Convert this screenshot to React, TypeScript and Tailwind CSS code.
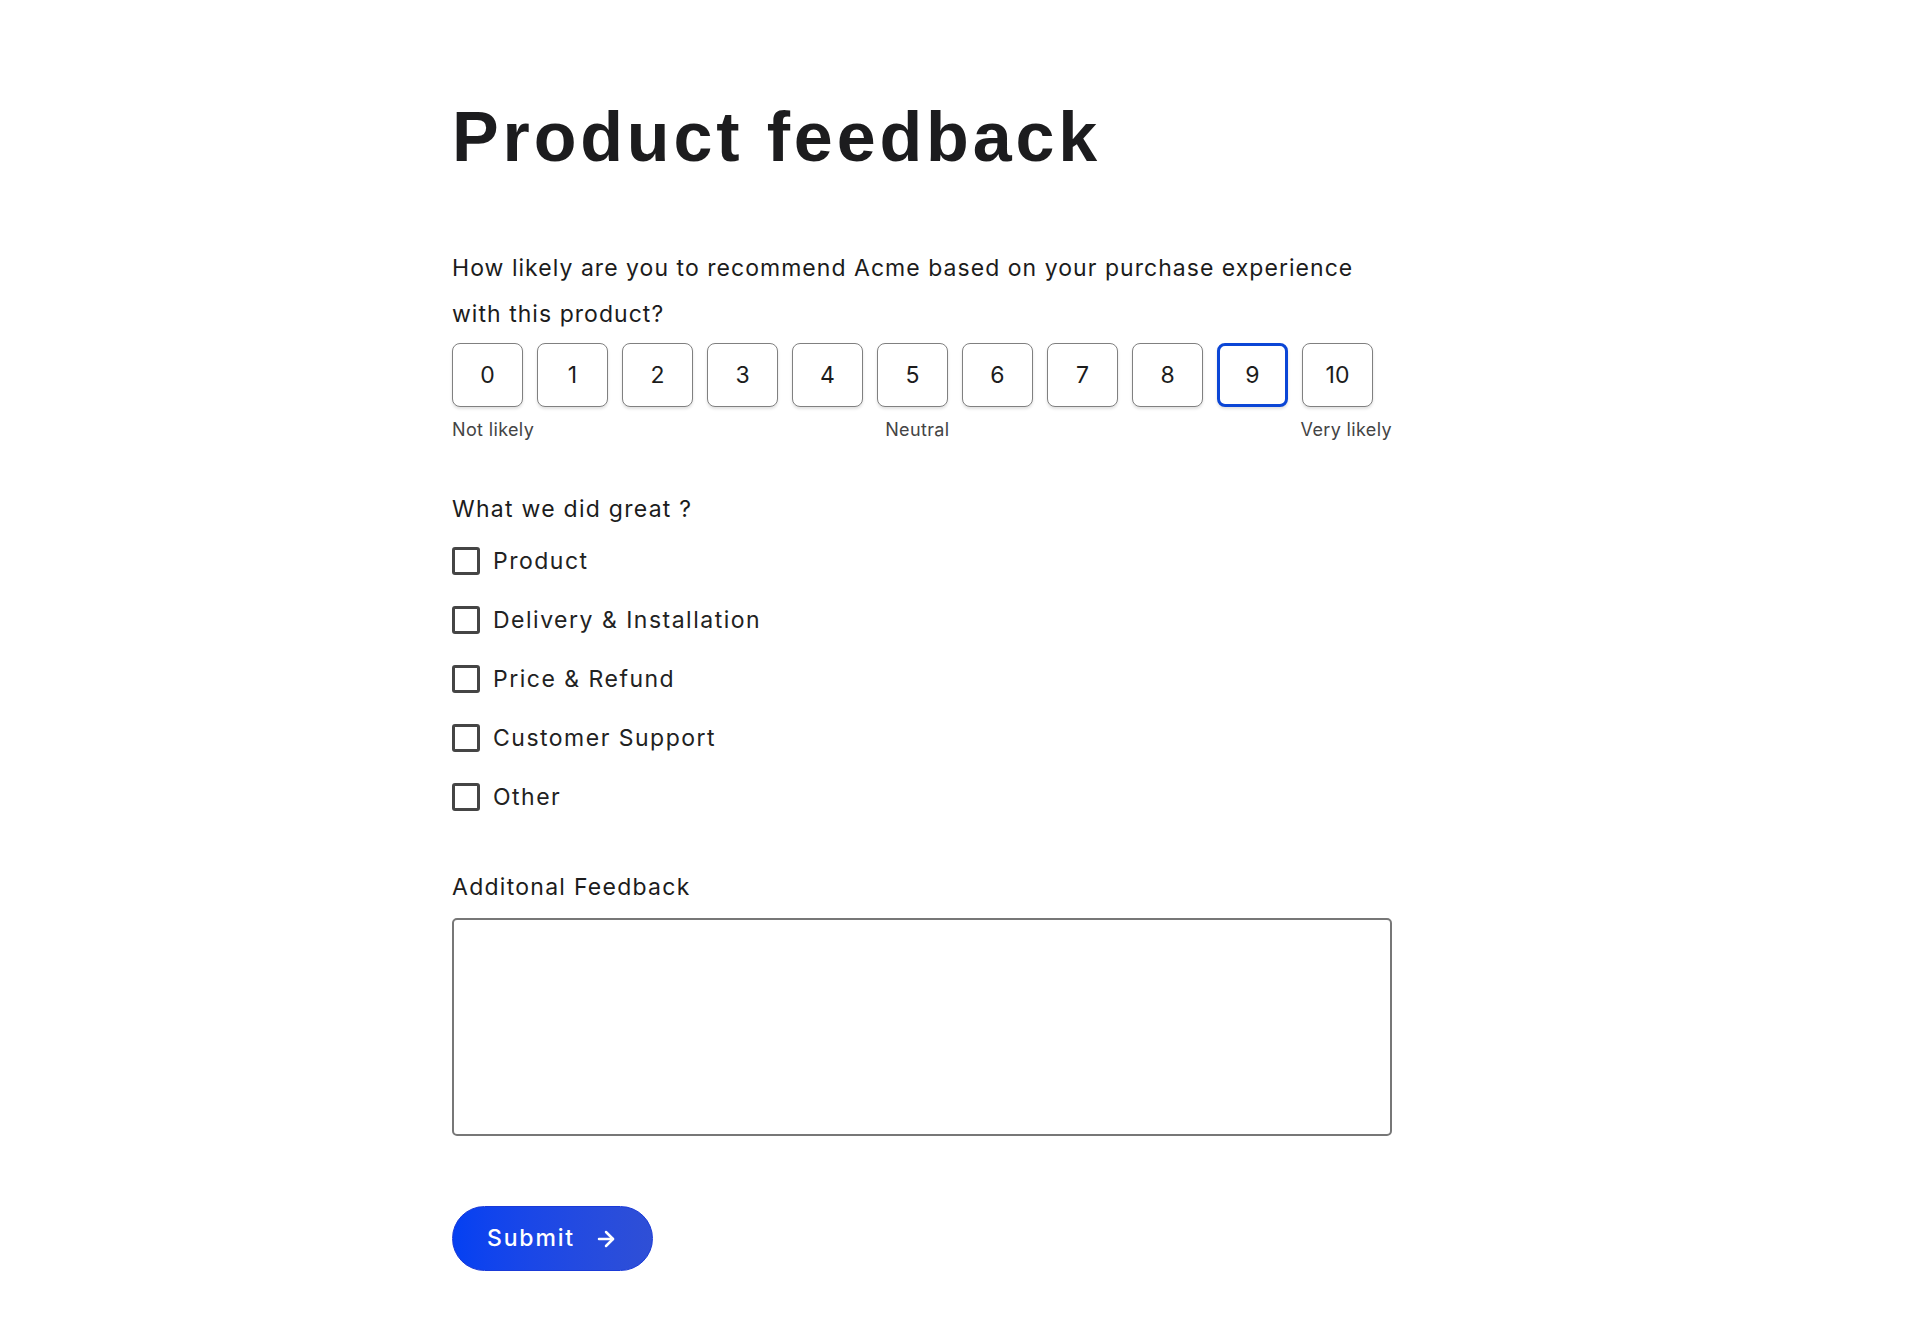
import { useState } from 'react'
import { ArrowRight } from 'lucide-react'

const scores = [0, 1, 2, 3, 4, 5, 6, 7, 8, 9, 10]
const reasons = [
    'Product',
    'Delivery & Installation',
    'Price & Refund',
    'Customer Support',
    'Other',
]

const App = () => {
    const [score, setScore] = useState<number>(9)
    const [checked, setChecked] = useState<string[]>([])

    const toggle = (reason: string) => {
        setChecked(prev =>
            prev.includes(reason)
                ? prev.filter(r => r !== reason)
                : [...prev, reason],
        )
    }

    return (
        <div className="min-h-screen bg-white font-['Inter',sans-serif] text-[#1c1c1c]">
            <div className="pl-[452px] pt-[102px] pb-[40px]">
                <div className="w-[940px]">
                    <h1 className="font-['Liberation_Sans',Arial,sans-serif] text-[70px] font-bold leading-none tracking-[0.055em] text-[#1c1c1e]">
                        Product feedback
                    </h1>

                    <p className="mt-[73px] whitespace-nowrap text-[23px] leading-[46px] tracking-[0.045em]">
                        How likely are you to recommend Acme based on your
                        purchase experience
                        <br />
                        with this product?
                    </p>

                    <div className="mt-[6px] flex gap-[14px]">
                        {scores.map(n => (
                            <button
                                key={n}
                                onClick={() => setScore(n)}
                                className={
                                    n === score
                                        ? 'flex h-[64px] w-[71px] items-center justify-center rounded-[8px] border-[3px] border-[#0b46d6] bg-white text-[23px] text-[#1c1c1c] shadow-[0_2px_3px_rgba(0,0,0,0.12)]'
                                        : 'flex h-[64px] w-[71px] items-center justify-center rounded-[8px] border-[1.5px] border-[#808080] bg-white text-[23px] text-[#1c1c1c] shadow-[0_2px_3px_rgba(0,0,0,0.12)]'
                                }
                            >
                                {n}
                            </button>
                        ))}
                    </div>

                    <div className="mt-[11px] flex justify-between text-[18px] leading-[24px] tracking-[0.02em] text-[#444]">
                        <span>Not likely</span>
                        <span>Neutral</span>
                        <span>Very likely</span>
                    </div>

                    <p className="mt-[52px] text-[23px] leading-[30px] tracking-[0.055em]">
                        What we did great ?
                    </p>

                    <div className="mt-[22px] flex flex-col gap-[29px]">
                        {reasons.map(reason => (
                            <label
                                key={reason}
                                className="flex h-[30px] cursor-pointer items-center gap-[13px]"
                            >
                                <span
                                    onClick={() => toggle(reason)}
                                    className="flex h-[28px] w-[28px] items-center justify-center rounded-[3px] border-[3px] border-[#454545] bg-white"
                                >
                                    {checked.includes(reason) && (
                                        <span className="h-[12px] w-[12px] bg-[#454545]" />
                                    )}
                                </span>
                                <span className="text-[23px] leading-[30px] tracking-[0.065em] text-[#222]">
                                    {reason}
                                </span>
                            </label>
                        ))}
                    </div>

                    <p className="mt-[60px] text-[23px] leading-[30px] tracking-[0.055em]">
                        Additonal Feedback
                    </p>

                    <textarea className="mt-[16px] block h-[218px] w-full resize-none rounded-[5px] border-2 border-[#777] p-3 text-[20px] outline-none" />

                    <button className="mt-[70px] flex h-[65px] w-[201px] items-center justify-center gap-[19px] rounded-full border border-[#1a3ad8] bg-gradient-to-r from-[#0440f2] to-[#2f4fd6] text-[23px] font-medium tracking-[0.08em] text-white">
                        Submit
                        <ArrowRight size={24} strokeWidth={2.5} />
                    </button>
                </div>
            </div>
        </div>
    )
}

export default App
